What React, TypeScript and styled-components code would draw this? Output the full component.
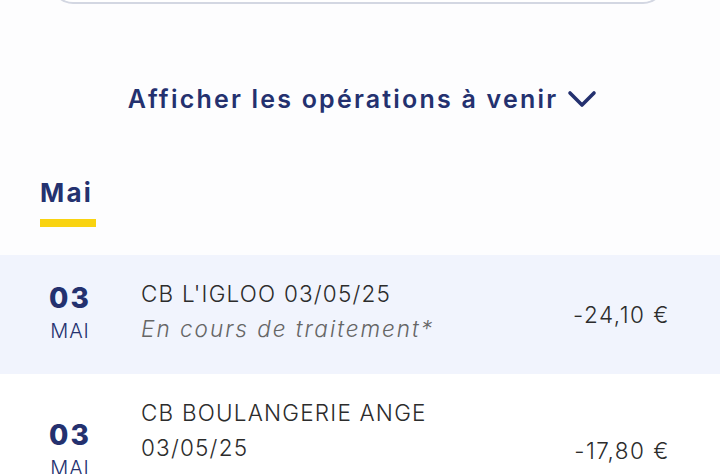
import React from "react"
import styled, { createGlobalStyle } from "styled-components"

const GlobalStyle = createGlobalStyle`
  html, body {
    margin: 0;
    padding: 0;
    background: #ffffff;
    overflow: hidden;
  }
  body {
    font-family: Inter, "Noto Sans", sans-serif;
  }
`

const Page = styled.div`
  width: 720px;
  height: 474px;
  overflow: hidden;
  background: #fdfdfe;
`

const CardEdge = styled.div`
  margin: -22px 55px 0 51px;
  height: 24px;
  border: 2px solid #d3d7e2;
  border-top: none;
  border-radius: 0 0 22px 22px;
  background: #ffffff;
`

const Toggle = styled.button`
  display: flex;
  align-items: center;
  justify-content: center;
  gap: 9px;
  margin: 79px auto 0;
  padding: 0 0 0 5px;
  border: none;
  background: none;
  font-family: Inter, sans-serif;
  font-size: 25px;
  font-weight: 600;
  line-height: 32px;
  letter-spacing: 2.2px;
  color: #24316f;
`

const MonthTab = styled.div`
  display: inline-flex;
  flex-direction: column;
  margin: 62px 0 0 40px;
`

const MonthLabel = styled.span`
  font-size: 26px;
  font-weight: 700;
  line-height: 32px;
  letter-spacing: 2.2px;
  color: #24316f;
`

const Underline = styled.div`
  margin-top: 10px;
  width: 56px;
  height: 8px;
  background: #f9d310;
`

const List = styled.div`
  margin-top: 28px;
`

const Row = styled.div<{ $highlight?: boolean }>`
  display: flex;
  align-items: center;
  padding: 21px 50px 22px 40px;
  background: ${(p) => (p.$highlight ? "#f1f4fd" : "#ffffff")};
`

const DateCol = styled.div`
  width: 60px;
  display: flex;
  flex-direction: column;
  align-items: center;
  margin-right: 41px;
  color: #24316f;
`

const Day = styled.span`
  font-size: 28px;
  font-weight: 800;
  line-height: 34px;
  letter-spacing: 2px;
`

const Month = styled.span`
  font-size: 20px;
  font-weight: 300;
  line-height: 32px;
  letter-spacing: 1px;
`

const Details = styled.div`
  flex: 1;
  max-width: 380px;
  display: flex;
  flex-direction: column;
  padding-bottom: 6px;
`

const Label = styled.span`
  font-size: 22.5px;
  font-weight: 300;
  line-height: 35px;
  letter-spacing: 1.2px;
  color: #2c2c2c;
`

const Status = styled.span`
  font-size: 22.5px;
  font-weight: 300;
  font-style: italic;
  line-height: 35px;
  letter-spacing: 2px;
  color: #666666;
`

const Amount = styled.span`
  margin-left: auto;
  font-size: 22.5px;
  font-weight: 300;
  letter-spacing: 1.5px;
  color: #2c2c2c;
  white-space: nowrap;
`

const Chevron = () => (
  <svg width="30" height="20" viewBox="0 0 30 20" fill="none">
    <polyline
      points="3,4 15,16 27,4"
      stroke="#24316f"
      strokeWidth="3.6"
      strokeLinecap="round"
      strokeLinejoin="round"
    />
  </svg>
)

interface Operation {
  day: string
  month: string
  label: string
  amount: string
  pending: boolean
}

const operations: Operation[] = [
  { day: "03", month: "MAI", label: "CB L'IGLOO 03/05/25", amount: "-24,10 €", pending: true },
  { day: "03", month: "MAI", label: "CB BOULANGERIE ANGE 03/05/25", amount: "-17,80 €", pending: true },
]

const App = () => {
  return (
    <Page>
      <GlobalStyle />
      <CardEdge />
      <Toggle>
        Afficher les opérations à venir
        <Chevron />
      </Toggle>
      <MonthTab>
        <MonthLabel>Mai</MonthLabel>
        <Underline />
      </MonthTab>
      <List>
        {operations.map((op, i) => (
          <Row key={i} $highlight={i === 0}>
            <DateCol>
              <Day>{op.day}</Day>
              <Month>{op.month}</Month>
            </DateCol>
            <Details>
              <Label>{op.label}</Label>
              {op.pending && <Status>En cours de traitement*</Status>}
            </Details>
            <Amount>{op.amount}</Amount>
          </Row>
        ))}
      </List>
    </Page>
  )
}

export default App
